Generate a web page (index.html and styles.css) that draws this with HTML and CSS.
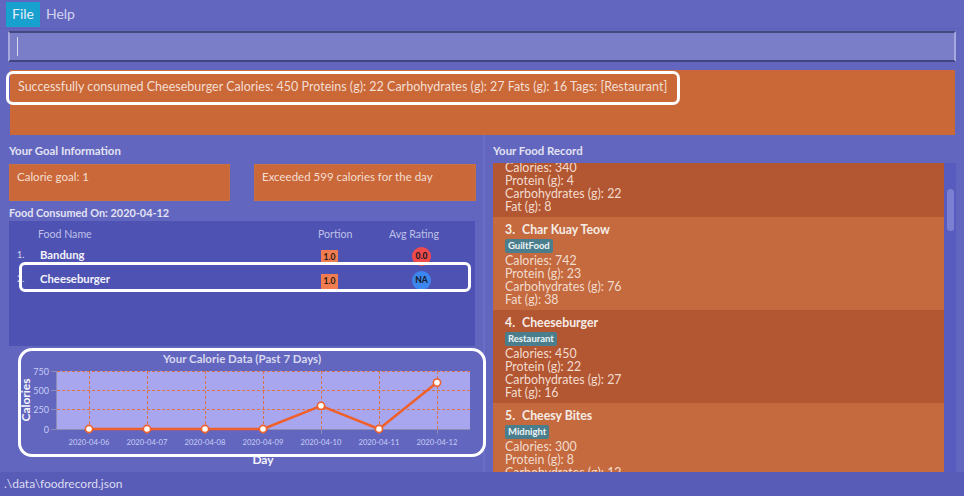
FILE: index.html
```html
<!DOCTYPE html>
<html>
<head>
<meta charset="utf-8">
<link rel="stylesheet" href="styles.css">
</head>
<body>
<div class="app">
  <nav class="menubar"><span class="menu active">File</span><span class="menu">Help</span></nav>
  <div class="cmd-wrap"><div class="cmd"><span class="caret"></span></div></div>
  <div class="result-wrap">
    <div class="result">Successfully consumed Cheeseburger Calories: 450 Proteins (g): 22 Carbohydrates (g): 27 Fats (g): 16 Tags: [Restaurant]</div>
  </div>
  <div class="panels">
    <section class="left">
      <div class="left-top">
        <h2 class="ptitle">Your Goal Information</h2>
        <div class="goals">
          <div class="goal">Calorie goal: 1</div>
          <div class="goal">Exceeded 599 calories for the day</div>
        </div>
        <h2 class="ptitle consumed">Food Consumed On: 2020-04-12</h2>
        <div class="table">
          <div class="trow thead"><span></span><span>Food Name</span><span>Portion</span><span>Avg Rating</span></div>
          <div class="trow"><span class="idx">1.</span><span class="fname">Bandung</span><span><b class="portion">1.0</b></span><span><b class="rating red">0.0</b></span></div>
          <div class="trow"><span class="idx">2.</span><span class="fname">Cheeseburger</span><span><b class="portion">1.0</b></span><span><b class="rating blue">NA</b></span></div>
        </div>
      </div>
      <svg class="chart" width="484" height="126" viewBox="0 0 484 126">
        <text x="242" y="17" text-anchor="middle" class="c-title">Your Calorie Data (Past 7 Days)</text>
        <rect x="57" y="25" width="413" height="58" fill="#A8A6EE"/>
        <g stroke="#D9744A" stroke-width="1" stroke-dasharray="3 2" fill="none">
          <line x1="57" y1="25.5" x2="470" y2="25.5"/>
          <line x1="57" y1="44.5" x2="470" y2="44.5"/>
          <line x1="57" y1="63.5" x2="470" y2="63.5"/>
          <line x1="89.5" y1="25" x2="89.5" y2="83"/>
          <line x1="147.5" y1="25" x2="147.5" y2="83"/>
          <line x1="205.5" y1="25" x2="205.5" y2="83"/>
          <line x1="263.5" y1="25" x2="263.5" y2="83"/>
          <line x1="321.5" y1="25" x2="321.5" y2="83"/>
          <line x1="379.5" y1="25" x2="379.5" y2="83"/>
          <line x1="437.5" y1="25" x2="437.5" y2="83"/>
        </g>
        <g stroke="#8C8CB4" stroke-width="1">
          <line x1="56.5" y1="25" x2="56.5" y2="83"/>
          <line x1="56" y1="83.5" x2="470" y2="83.5"/>
          <line x1="51" y1="25.5" x2="57" y2="25.5"/>
          <line x1="51" y1="44.5" x2="57" y2="44.5"/>
          <line x1="51" y1="63.5" x2="57" y2="63.5"/>
          <line x1="51" y1="83.5" x2="57" y2="83.5"/>
          <line x1="89.5" y1="83" x2="89.5" y2="88"/>
          <line x1="147.5" y1="83" x2="147.5" y2="88"/>
          <line x1="205.5" y1="83" x2="205.5" y2="88"/>
          <line x1="263.5" y1="83" x2="263.5" y2="88"/>
          <line x1="321.5" y1="83" x2="321.5" y2="88"/>
          <line x1="379.5" y1="83" x2="379.5" y2="88"/>
          <line x1="437.5" y1="83" x2="437.5" y2="88"/>
        </g>
        <g class="c-ylab" text-anchor="end">
          <text x="49" y="28.5">750</text>
          <text x="49" y="47.5">500</text>
          <text x="49" y="66.5">250</text>
          <text x="49" y="86.5">0</text>
        </g>
        <g class="c-xlab" text-anchor="middle">
          <text x="89" y="99">2020-04-06</text>
          <text x="147" y="99">2020-04-07</text>
          <text x="205" y="99">2020-04-08</text>
          <text x="263" y="99">2020-04-09</text>
          <text x="321" y="99">2020-04-10</text>
          <text x="379" y="99">2020-04-11</text>
          <text x="437" y="99">2020-04-12</text>
        </g>
        <polyline points="89,83 147,83 205,83 263,83 321,59.8 379,83 437,36.6" fill="none" stroke="#F0602A" stroke-width="2.5" stroke-linejoin="round"/>
        <g fill="#ffffff" stroke="#F0602A" stroke-width="1.6">
          <circle cx="89" cy="83" r="3.6"/>
          <circle cx="147" cy="83" r="3.6"/>
          <circle cx="205" cy="83" r="3.6"/>
          <circle cx="263" cy="83" r="3.6"/>
          <circle cx="321" cy="59.8" r="3.6"/>
          <circle cx="379" cy="83" r="3.6"/>
          <circle cx="437" cy="36.6" r="3.6"/>
        </g>
        <text class="c-axis" transform="translate(30 54) rotate(-90)" text-anchor="middle">Calories</text>
        <text class="c-axis" x="263" y="118" text-anchor="middle">Day</text>
      </svg>
    </section>
    <section class="right">
      <h2 class="ptitle">Your Food Record</h2>
      <div class="listbox">
        <div class="listview">
          <div class="listinner">
            <div class="food dark partial">
              <div class="fline">Calories: 340</div>
              <div class="fline">Protein (g): 4</div>
              <div class="fline">Carbohydrates (g): 22</div>
              <div class="fline">Fat (g): 8</div>
            </div>
            <div class="food light">
              <div class="ftitle"><span class="num">3.</span>Char Kuay Teow</div>
              <div class="tags"><span class="tag">GuiltFood</span></div>
              <div class="fline">Calories: 742</div>
              <div class="fline">Protein (g): 23</div>
              <div class="fline">Carbohydrates (g): 76</div>
              <div class="fline">Fat (g): 38</div>
            </div>
            <div class="food dark">
              <div class="ftitle"><span class="num">4.</span>Cheeseburger</div>
              <div class="tags"><span class="tag">Restaurant</span></div>
              <div class="fline">Calories: 450</div>
              <div class="fline">Protein (g): 22</div>
              <div class="fline">Carbohydrates (g): 27</div>
              <div class="fline">Fat (g): 16</div>
            </div>
            <div class="food light">
              <div class="ftitle"><span class="num">5.</span>Cheesy Bites</div>
              <div class="tags"><span class="tag">Midnight</span></div>
              <div class="fline">Calories: 300</div>
              <div class="fline">Protein (g): 8</div>
              <div class="fline">Carbohydrates (g): 12</div>
            </div>
          </div>
        </div>
        <div class="scrollbar"><div class="thumb"></div></div>
      </div>
    </section>
  </div>
  <footer class="status">.\data\foodrecord.json</footer>

  <div class="hl hl-result"></div>
  <div class="hl hl-row"></div>
  <div class="hl hl-chart"></div>
</div>
</body>
</html>
```
FILE: styles.css
```css
* { box-sizing: border-box; margin: 0; padding: 0; }
html, body { width: 964px; height: 496px; overflow: hidden; }
body {
  background: #6366BE;
  font-family: Lato, "Open Sans", sans-serif;
  color: #E6E6F5;
}
.app { position: relative; width: 964px; height: 496px; display: flex; flex-direction: column; }

.menubar { height: 29px; display: flex; align-items: flex-start; padding: 2px 0 0 6px; border-bottom: 1px solid #5E61B8; }
.menu { height: 25px; padding: 0 6px; line-height: 24px; font-size: 14px; color: #D2D4F0; }
.menu.active { background: #18A0CF; color: #E4EEF8; }

.cmd-wrap { padding: 2px 8px 4px 8px; }
.cmd {
  height: 31px; background: #7A7DC8;
  border-top: 2px solid #45487F; border-bottom: 2px solid #41447F;
  border-left: 2px solid #A6A8DE; border-right: 2px solid #A6A8DE;
  display: flex; align-items: center; padding-left: 7px;
}
.caret { width: 1px; height: 19px; background: #D8DAF2; }

.result-wrap { padding: 4px 9px 0 10px; }
.result { height: 65px; background: #CA6838; padding: 9px 8px; font-size: 12.5px; line-height: 16px; color: #F4DED2; }

.panels { height: 337px; display: flex; }
.left { width: 485px; border-right: 2px solid #6B6EC6; display: flex; flex-direction: column; }
.left-top { padding: 8px 8px 0 9px; }
.ptitle { font-size: 11.4px; font-weight: 700; line-height: 16px; height: 16px; color: #E2E2F4; }
.goals { margin-top: 5px; display: grid; grid-template-columns: 221px 222px; column-gap: 24px; }
.goal { height: 37px; background: #CB6839; border: 1px solid #C8703F; padding: 4px 7px; font-size: 11.5px; line-height: 16px; color: #F4DED2; }
.consumed { padding-top: 4px; box-sizing: content-box; height: 16px; font-size: 10.9px; }

.table { height: 125px; background: #4E52B3; padding-left: 8px; }
.trow { display: grid; grid-template-columns: 21px 280px 71px 87px; height: 24px; align-items: center; }
.thead { height: 21px; padding-top: 5px; align-items: start; font-size: 10.6px; line-height: 16px; color: #BFC1E8; }
.idx { font-size: 9px; color: #D8D8F0; }
.fname { padding-left: 2px; font-size: 11.3px; font-weight: 700; color: #F2F2FA; }
.portion { display: inline-block; margin-left: 3px; width: 17px; height: 15px; background: #F07C50; color: #2A1A12; font-size: 8.5px; font-weight: 700; line-height: 15px; text-align: center; }
.rating { display: inline-block; margin-left: 23px; width: 19px; height: 19px; border-radius: 50%; font-size: 8.5px; font-weight: 900; line-height: 19px; text-align: center; color: #1A1A2A; }
.rating.red { background: #F04A4A; }
.rating.blue { background: #3C86F0; }

.chart { display: block; }
.c-title { font-size: 11.5px; font-weight: 700; fill: #D8D8F0; font-family: Lato, sans-serif; }
.c-ylab text { font-size: 9px; fill: #C6CCF8; font-family: Lato, sans-serif; }
.c-xlab text { font-size: 7.6px; fill: #C6CEF8; font-family: Lato, sans-serif; }
.c-axis { font-size: 12px; font-weight: 700; fill: #F4F4FC; font-family: Lato, sans-serif; }

.right { flex: 1; padding: 8px 8px 0 8px; display: flex; flex-direction: column; }
.listbox { margin-top: 4px; height: 309px; display: flex; }
.listview { flex: 1; overflow: hidden; }
.listinner { margin-top: -2px; }
.food { height: 93px; padding: 4px 12px; color: #F2DCCF; }
.food.partial { height: 56px; padding-top: 0; }
.food.dark { background: #B35632; }
.food.light { background: #C46A3E; }
.ftitle { font-size: 12.3px; font-weight: 700; line-height: 18px; color: #F6ECE6; }
.num { display: inline-block; width: 17px; }
.tags { height: 14px; margin-bottom: 1px; display: flex; }
.tag { background: #4B7E8C; color: #EEF4F6; font-size: 9.5px; font-weight: 700; line-height: 14px; padding: 0 3px; border-radius: 2px; }
.fline { font-size: 12.4px; line-height: 13px; }
.scrollbar { width: 12px; background: #585CBE; padding: 26px 2px 0 3px; }
.thumb { width: 7px; height: 42px; border-radius: 4px; background: #7C80D2; }

.status { height: 24px; background: #595CB6; padding-left: 4px; font-size: 12px; line-height: 24px; color: #DCDCF2; }

.hl { position: absolute; border: 3px solid #FFFFFF; pointer-events: none; }
.hl-result { left: 6px; top: 71px; width: 674px; height: 34px; border-radius: 7px; }
.hl-row { left: 19px; top: 262px; width: 452px; height: 30px; border-radius: 6px; }
.hl-chart { left: 18px; top: 348px; width: 468px; height: 109px; border-radius: 14px; }
```
